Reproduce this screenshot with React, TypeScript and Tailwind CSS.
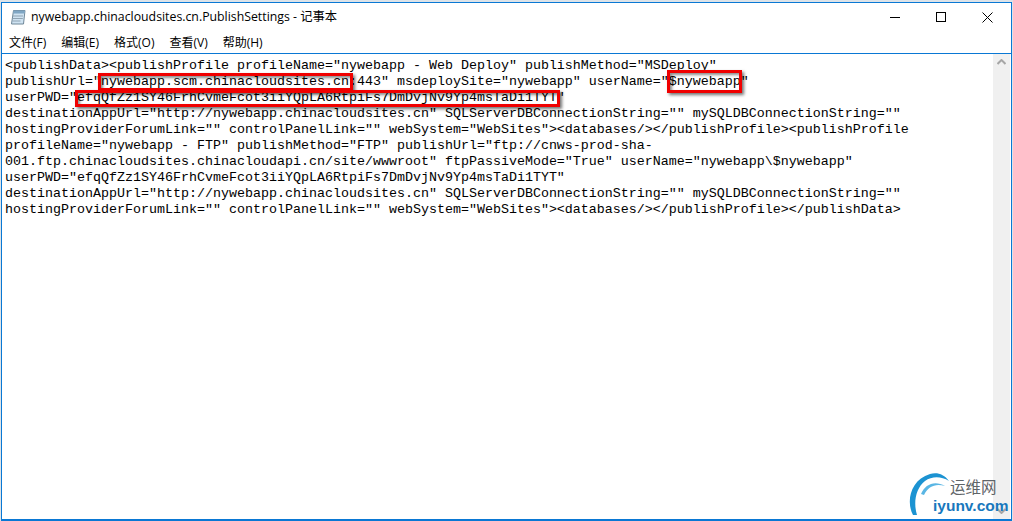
import React from 'react'

const sans = { fontFamily: '"Open Sans", "Noto Sans CJK SC", sans-serif' }

const lines = [
  '<publishData><publishProfile profileName="nywebapp - Web Deploy" publishMethod="MSDeploy"',
  'publishUrl="nywebapp.scm.chinacloudsites.cn:443" msdeploySite="nywebapp" userName="$nywebapp"',
  'userPWD="efqQfZz1SY46FrhCvmeFcot3iiYQpLA6RtpiFs7DmDvjNv9Yp4msTaDi1TYT"',
  'destinationAppUrl="http://nywebapp.chinacloudsites.cn" SQLServerDBConnectionString="" mySQLDBConnectionString=""',
  'hostingProviderForumLink="" controlPanelLink="" webSystem="WebSites"><databases/></publishProfile><publishProfile',
  'profileName="nywebapp - FTP" publishMethod="FTP" publishUrl="ftp://cnws-prod-sha-',
  '001.ftp.chinacloudsites.chinacloudapi.cn/site/wwwroot" ftpPassiveMode="True" userName="nywebapp\\$nywebapp"',
  'userPWD="efqQfZz1SY46FrhCvmeFcot3iiYQpLA6RtpiFs7DmDvjNv9Yp4msTaDi1TYT"',
  'destinationAppUrl="http://nywebapp.chinacloudsites.cn" SQLServerDBConnectionString="" mySQLDBConnectionString=""',
  'hostingProviderForumLink="" controlPanelLink="" webSystem="WebSites"><databases/></publishProfile></publishData>',
]

const menus = ['文件(F)', '编辑(E)', '格式(O)', '查看(V)', '帮助(H)']

function NotepadIcon() {
  return (
    <svg width="16" height="16" viewBox="0 0 16 16" className="shrink-0">
      <path d="M3.500 1.500h11.500l-1.500 13.500H1.500z" fill="#cfe3f2" stroke="#6f8798" />
      <path d="M3.500 1.500h11.500l-.4 3H3.100z" fill="#7fa6c4" />
      <path d="M3 7h10M2.800 9.500h10M2.500 12h8" stroke="#8fa3b3" />
    </svg>
  )
}

function Highlight({ className }: { className: string }) {
  return <div className={`absolute border-[3px] border-[#f00000] shadow-[2px_2px_3px_rgba(0,0,0,0.55),inset_2px_2px_3px_rgba(0,0,0,0.45)] ${className}`} />
}

function Logo() {
  return (
    <div className="absolute left-[908px] top-[472px] w-[104px] h-[46px]">
      <svg width="44" height="46" viewBox="0 0 44 46" className="absolute left-0 top-0">
        <path d="M5 43C-2 30 2 8 22 2C29 0 36 2 41 9C33 4 24 4 17 9C8 16 5 30 9 43Z" fill="#1c93d2" />
        <path d="M13 22C17 12 27 8 37 14C28 11 20 14 16 23Z" fill="#5ab6e4" />
      </svg>
      <div className="absolute left-[42px] top-[6px] text-[15.500px] leading-[18px] text-[#5f6468] whitespace-nowrap" style={sans}>运维网</div>
      <div className="absolute left-[25px] top-[25px] text-[15.500px] leading-[18px] font-bold text-[#1878bd] whitespace-nowrap" style={{ fontFamily: '"Liberation Sans", sans-serif' }}>iyunv.com</div>
    </div>
  )
}

export default function App() {
  return (
    <div className="relative w-[1013px] h-[521px] bg-[#dde3e8] pt-[2px] px-px overflow-hidden">
      <div className="h-[519px] bg-white border border-b-2 border-[#0a78d4]">
        <div className="h-[28px] flex items-center pl-[8px] text-[12.300px] text-black" style={sans}>
          <NotepadIcon />
          <span className="ml-[5px] whitespace-nowrap">nywebapp.chinacloudsites.cn.PublishSettings - 记事本</span>
          <div className="ml-auto flex items-center mr-[1px]">
            <div className="w-[46px] flex justify-center">
              <div className="w-[10px] h-px bg-black" />
            </div>
            <div className="w-[46px] flex justify-center">
              <div className="w-[10px] h-[10px] border border-black" />
            </div>
            <div className="w-[46px] flex justify-center">
              <svg width="11" height="11" viewBox="0 0 11 11">
                <path d="M.5.5l10 10M10.500.5l-10 10" stroke="#000" />
              </svg>
            </div>
          </div>
        </div>
        <div className="h-[22px] flex items-center gap-[15px] pl-[7px] pt-[1px] text-[12px] text-black" style={sans}>
          {menus.map(m => <span key={m}>{m}</span>)}
        </div>
        <div className="h-[466px] flex border-t border-[#0a78d4]">
          <div className="flex-1 pl-[3px] pt-[4px] text-black text-[13.33px] leading-[16px]" style={{ fontFamily: '"Liberation Mono", monospace' }}>
            {lines.map((l, i) => <div key={i} className="whitespace-pre h-[16px]">{l}</div>)}
          </div>
          <div className="w-[17px] mr-px bg-[#f0f0f0] flex flex-col items-center justify-between py-[5px]">
            <svg width="9" height="6" viewBox="0 0 9 6"><path d="M.5 5L4.500 1l4 4" stroke="#a6a6a6" strokeWidth="2" fill="none" /></svg>
            <svg width="9" height="6" viewBox="0 0 9 6"><path d="M.5 1l4 4 4-4" stroke="#a6a6a6" strokeWidth="2" fill="none" /></svg>
          </div>
        </div>
      </div>
      <Highlight className="left-[98px] top-[73px] w-[255px] h-[18px]" />
      <Highlight className="left-[667px] top-[70px] w-[75px] h-[23px]" />
      <Highlight className="left-[75px] top-[90px] w-[485px] h-[17px]" />
      <Logo />
    </div>
  )
}
